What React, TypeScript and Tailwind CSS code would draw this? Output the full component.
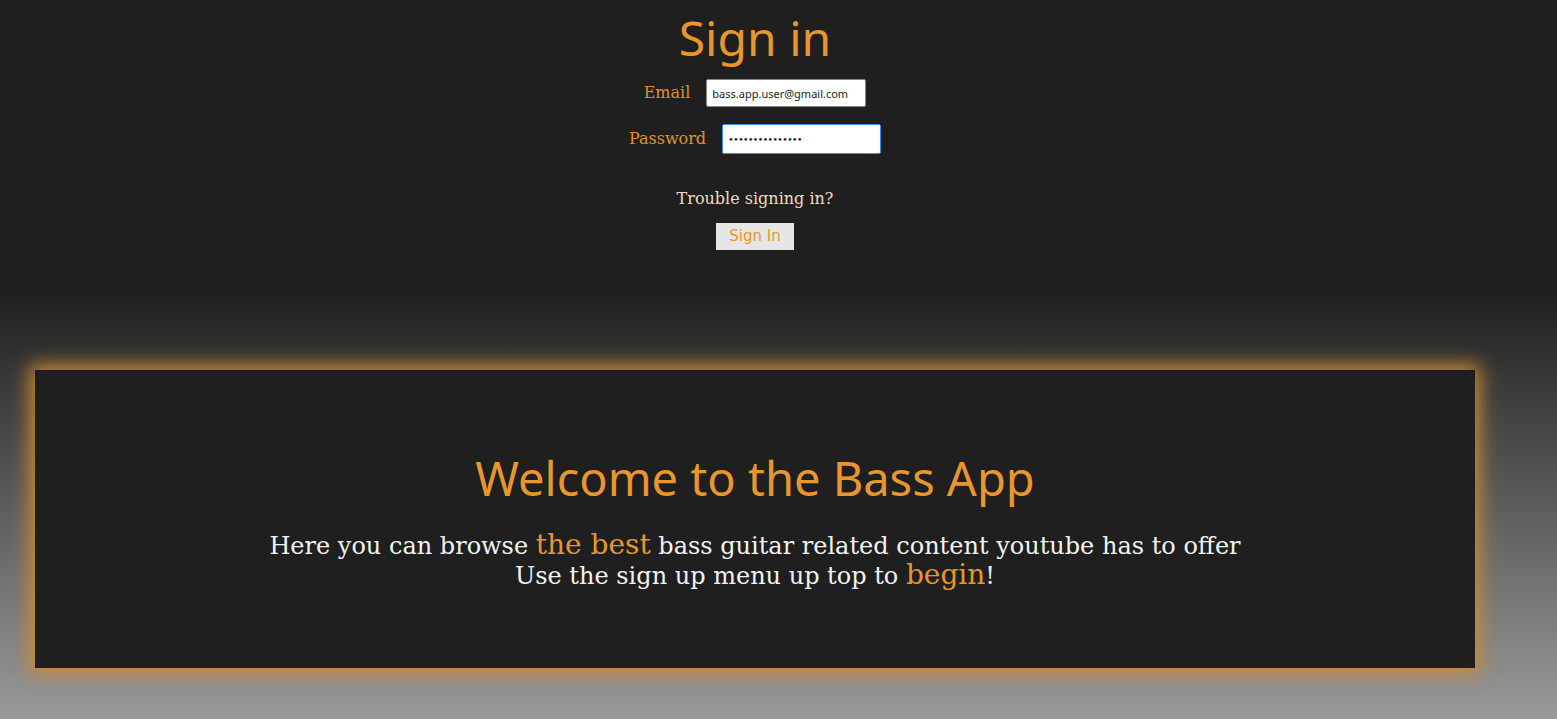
export default function App() {
  return (
    <div className="min-h-[719px] w-full bg-[#1f1f1f] font-['DejaVu_Serif',serif]">
      <div className="w-[1510px]">
        <div className="h-[290px] flex flex-col items-center">
          <h1 className="mt-[6px] text-[48px] leading-[64px] text-[#e8962e] font-['Noto_Sans',sans-serif]">Sign in</h1>
          <div className="mt-[9px] flex items-center gap-[16px]">
            <label className="text-[16px] text-[#e0922e]">Email</label>
            <input
              readOnly
              value="bass.app.user@gmail.com"
              className="w-[160px] h-[28px] px-[5px] bg-white text-[11px] text-[#222] border border-[#888] rounded-[2px] font-['Noto_Sans',sans-serif] outline-none"
            />
          </div>
          <div className="mt-[17px] flex items-center gap-[16px]">
            <label className="text-[16px] text-[#e0922e]">Password</label>
            <input
              readOnly
              type="password"
              value="***************"
              className="w-[159px] h-[30px] px-[5px] bg-white text-[10px] tracking-[-1px] text-[#222] border border-[#3b8eea] rounded-[2px] outline-none"
            />
          </div>
          <p className="mt-[33px] text-[16px] text-[#f0dcc0]">Trouble signing in?</p>
          <button className="mt-[12px] w-[78px] h-[27px] bg-[#e6e6e6] text-[15px] text-[#e8962e] font-['DejaVu_Sans',sans-serif]">
            Sign In
          </button>
        </div>
      </div>
      <div className="h-[429px] bg-[linear-gradient(to_bottom,#1f1f1f,#999999)] pt-[80px]">
        <div className="w-[1510px]">
          <div className="mx-[35px] h-[298px] bg-[#1f1f1f] shadow-[0_0_18px_5px_#cf8a33] flex flex-col items-center justify-center">
            <h2 className="text-[47px] leading-[60px] text-[#e8962e] font-['Noto_Sans',sans-serif]">Welcome to the Bass App</h2>
            <p className="mt-[23px] text-[24px] leading-[29px] text-[#f2f2f2] text-center">
              Here you can browse <span className="text-[28px] leading-none text-[#e8962e]">the best</span> bass guitar related content youtube has to offer
              <br />
              Use the sign up menu up top to <span className="text-[28px] leading-none text-[#e8962e]">begin</span>!
            </p>
          </div>
        </div>
      </div>
    </div>
  );
}
